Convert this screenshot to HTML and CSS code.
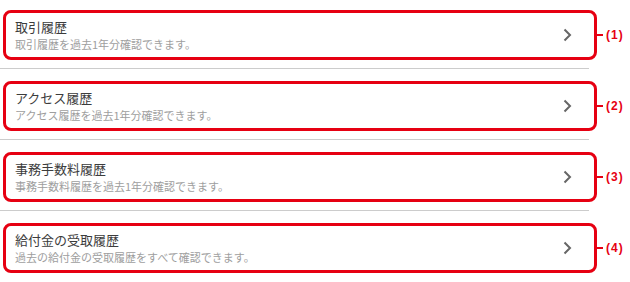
FILE: index.html
```html
<!DOCTYPE html>
<html lang="ja">
<head>
<meta charset="utf-8">
<link rel="stylesheet" href="styles.css">
</head>
<body>
<ul class="list">
  <li class="row">
    <div class="line-wrap">
      <a class="card">
        <div class="text">
          <p class="title">取引履歴</p>
          <p class="desc">取引履歴を過去1年分確認できます。</p>
        </div>
        <svg class="chev" width="10" height="14" viewBox="0 0 10 14"><path d="M2.5 1.5 L8 7 L2.5 12.5" fill="none" stroke="#666" stroke-width="2"/></svg>
      </a>
      <span class="tag"><span class="conn"></span>(1)</span>
    </div>
    <div class="divider"></div>
  </li>
  <li class="row">
    <div class="line-wrap">
      <a class="card">
        <div class="text">
          <p class="title">アクセス履歴</p>
          <p class="desc">アクセス履歴を過去1年分確認できます。</p>
        </div>
        <svg class="chev" width="10" height="14" viewBox="0 0 10 14"><path d="M2.5 1.5 L8 7 L2.5 12.5" fill="none" stroke="#666" stroke-width="2"/></svg>
      </a>
      <span class="tag"><span class="conn"></span>(2)</span>
    </div>
    <div class="divider"></div>
  </li>
  <li class="row">
    <div class="line-wrap">
      <a class="card">
        <div class="text">
          <p class="title">事務手数料履歴</p>
          <p class="desc">事務手数料履歴を過去1年分確認できます。</p>
        </div>
        <svg class="chev" width="10" height="14" viewBox="0 0 10 14"><path d="M2.5 1.5 L8 7 L2.5 12.5" fill="none" stroke="#666" stroke-width="2"/></svg>
      </a>
      <span class="tag"><span class="conn"></span>(3)</span>
    </div>
    <div class="divider"></div>
  </li>
  <li class="row">
    <div class="line-wrap">
      <a class="card">
        <div class="text">
          <p class="title">給付金の受取履歴</p>
          <p class="desc">過去の給付金の受取履歴をすべて確認できます。</p>
        </div>
        <svg class="chev" width="10" height="14" viewBox="0 0 10 14"><path d="M2.5 1.5 L8 7 L2.5 12.5" fill="none" stroke="#666" stroke-width="2"/></svg>
      </a>
      <span class="tag"><span class="conn"></span>(4)</span>
    </div>
  </li>
</ul>
</body>
</html>
```
FILE: styles.css
```css
html, body {
  margin: 0;
  padding: 0;
  background: #fff;
  font-family: "Noto Sans CJK JP", "Noto Sans", sans-serif;
}
.list {
  list-style: none;
  margin: -2px 0 0 0;
  padding: 0;
  width: 630px;
}
.row {
  padding-top: 12px;
}
.line-wrap {
  display: flex;
  align-items: center;
  margin-left: 3px;
}
.card {
  box-sizing: border-box;
  width: 594px;
  height: 50px;
  border: 3px solid #e60012;
  border-radius: 8px;
  display: flex;
  align-items: center;
  justify-content: space-between;
  padding: 0 22px 0 9px;
}
.text {
  display: flex;
  flex-direction: column;
  gap: 2px;
}
.title {
  margin: 0;
  font-size: 13px;
  line-height: 17px;
  color: #3c3c3c;
  font-weight: 400;
}
.desc {
  margin: 0;
  font-size: 11px;
  line-height: 15px;
  color: #9e9e9e;
  font-weight: 400;
}
.chev {
  display: block;
}
.tag {
  display: flex;
  align-items: center;
  color: #e60012;
  font-family: "Liberation Sans", Arial, sans-serif;
  font-weight: bold;
  font-size: 12px;
  letter-spacing: 1px;
  gap: 3px;
}
.conn {
  display: block;
  width: 6px;
  height: 2px;
  background: #e60012;
}
.divider {
  margin-top: 8px;
  width: 589px;
  height: 1px;
  background: #ccc;
}
```
